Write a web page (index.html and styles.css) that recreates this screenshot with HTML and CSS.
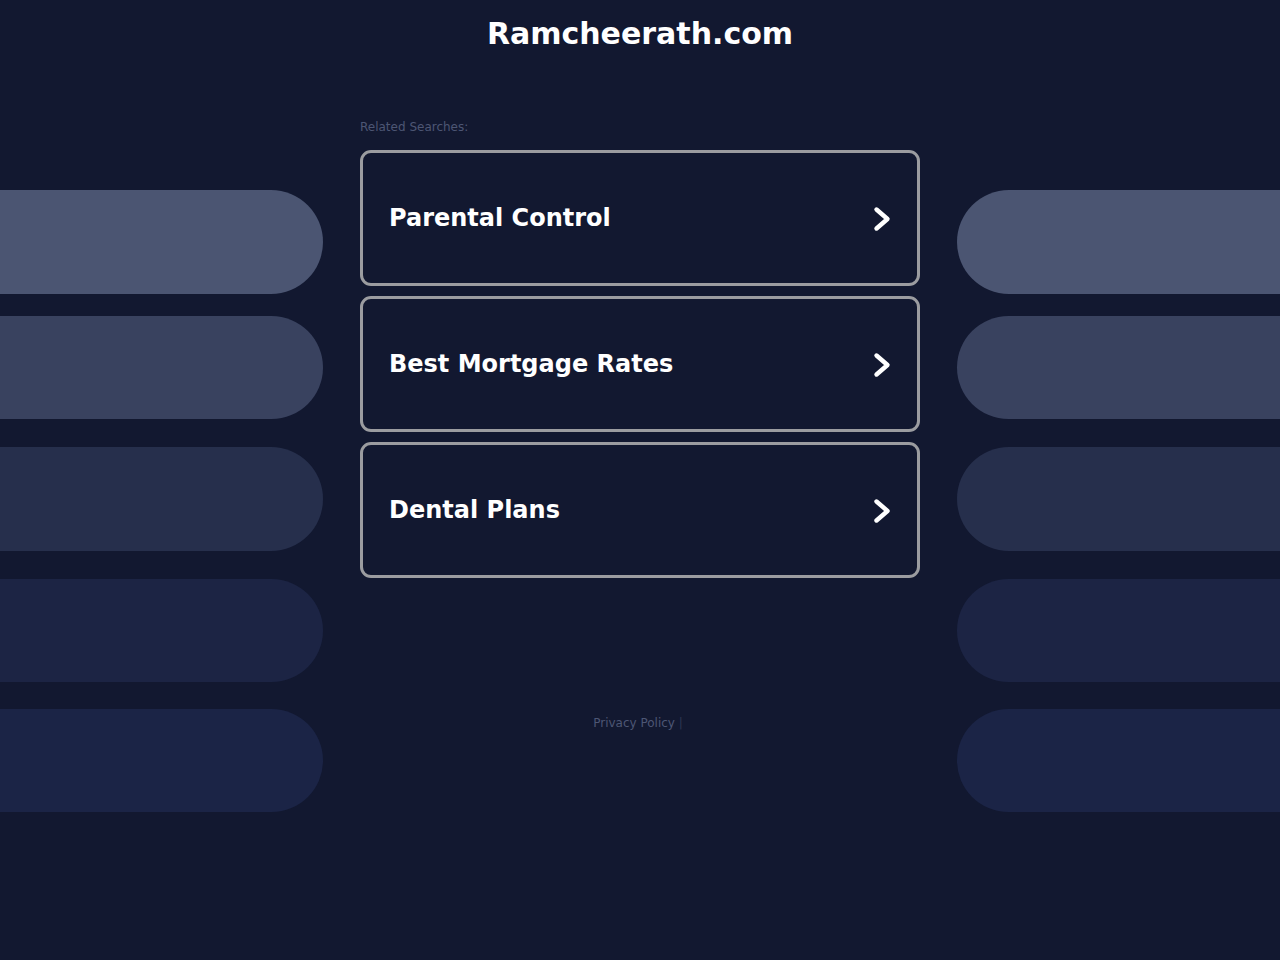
FILE: index.html
```html
<!DOCTYPE html>
<html lang="en">
<head>
<meta charset="utf-8">
<title>Ramcheerath.com</title>
<link rel="stylesheet" href="styles.css">
</head>
<body>
<header class="header">
  <h1 class="site-title">Ramcheerath.com</h1>
</header>
<div class="layout">
  <div class="deco deco-left">
    <div class="pill p1"></div>
    <div class="pill p2"></div>
    <div class="pill p3"></div>
    <div class="pill p4"></div>
    <div class="pill p5"></div>
  </div>
  <main class="main">
    <div class="related-label">Related Searches:</div>
    <div class="cards">
      <a class="card" href="#"><span class="card-text">Parental Control</span>
        <svg class="chev" viewBox="0 0 20 28" width="20" height="28"><polyline points="4.5,4.5 15.5,14 4.5,23.5" fill="none" stroke="#fff" stroke-width="4.4" stroke-linecap="round" stroke-linejoin="round"/></svg></a>
      <a class="card" href="#"><span class="card-text">Best Mortgage Rates</span>
        <svg class="chev" viewBox="0 0 20 28" width="20" height="28"><polyline points="4.5,4.5 15.5,14 4.5,23.5" fill="none" stroke="#fff" stroke-width="4.4" stroke-linecap="round" stroke-linejoin="round"/></svg></a>
      <a class="card" href="#"><span class="card-text">Dental Plans</span>
        <svg class="chev" viewBox="0 0 20 28" width="20" height="28"><polyline points="4.5,4.5 15.5,14 4.5,23.5" fill="none" stroke="#fff" stroke-width="4.4" stroke-linecap="round" stroke-linejoin="round"/></svg></a>
    </div>
    <footer class="footer"><a class="privacy" href="#">Privacy Policy</a> <span class="sep">|</span></footer>
  </main>
  <div class="deco deco-right">
    <div class="pill p1"></div>
    <div class="pill p2"></div>
    <div class="pill p3"></div>
    <div class="pill p4"></div>
    <div class="pill p5"></div>
  </div>
</div>
</body>
</html>
```
FILE: styles.css
```css
html, body {
  margin: 0;
  padding: 0;
  background: #121830;
  font-family: "DejaVu Sans", "Liberation Sans", sans-serif;
  height: 100%;
}
.header {
  height: 66px;
  display: flex;
  justify-content: center;
}
.site-title {
  margin: 16px 0 0 0;
  font-size: 30px;
  line-height: 36px;
  font-weight: bold;
  color: #ffffff;
}
.layout {
  display: grid;
  grid-template-columns: 323px 560px 323px;
  column-gap: 37px;
}
.deco {
  display: flex;
  flex-direction: column;
  padding-top: 124px;
}
.pill {
  height: 103px;
}
.p1 { background: #4b5572; height: 104px; }
.p2 { background: #39425f; margin-top: 22px; }
.p3 { background: #262f4c; margin-top: 28px; height: 104px; }
.p4 { background: #1c2444; margin-top: 28px; }
.p5 { background: #1b2446; margin-top: 27px; }
.deco-left .pill {
  border-radius: 0 52px 52px 0;
}
.deco-right .pill {
  border-radius: 52px 0 0 52px;
}
.related-label {
  margin-top: 53px;
  font-size: 12px;
  line-height: 16px;
  color: #4d5674;
}
.cards {
  margin-top: 15px;
  display: flex;
  flex-direction: column;
  gap: 10px;
}
.card {
  box-sizing: border-box;
  height: 136px;
  border: 3px solid #9b9ca0;
  border-radius: 11px;
  display: flex;
  align-items: center;
  justify-content: space-between;
  padding: 0 25px 0 26px;
  text-decoration: none;
}
.card-text {
  color: #ffffff;
  font-size: 24px;
  font-weight: bold;
}
.chev {
  display: block;
  margin-top: 1px;
}
.footer {
  margin-top: 137px;
  padding-right: 4px;
  text-align: center;
  font-size: 12px;
  line-height: 16px;
  color: #2e3652;
}
.privacy {
  color: #4d5674;
  text-decoration: none;
}
```
